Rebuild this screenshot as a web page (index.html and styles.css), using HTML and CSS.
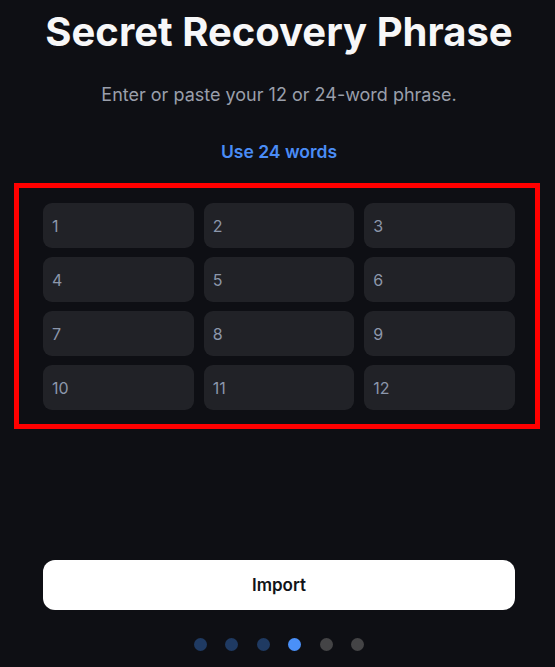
FILE: index.html
```html
<!DOCTYPE html>
<html lang="en">
<head>
<meta charset="utf-8">
<title>Secret Recovery Phrase</title>
<link rel="stylesheet" href="styles.css">
</head>
<body>
<main class="screen">
  <header class="intro">
    <h1 class="title">Secret Recovery Phrase</h1>
    <p class="subtitle">Enter or paste your 12 or 24-word phrase.</p>
    <a class="toggle" href="#">Use 24 words</a>
  </header>

  <section class="phrase-box">
    <div class="phrase-grid">
      <div class="word"><span class="num">1</span></div>
      <div class="word"><span class="num">2</span></div>
      <div class="word"><span class="num">3</span></div>
      <div class="word"><span class="num">4</span></div>
      <div class="word"><span class="num">5</span></div>
      <div class="word"><span class="num">6</span></div>
      <div class="word"><span class="num">7</span></div>
      <div class="word"><span class="num">8</span></div>
      <div class="word"><span class="num">9</span></div>
      <div class="word"><span class="num">10</span></div>
      <div class="word"><span class="num">11</span></div>
      <div class="word"><span class="num">12</span></div>
    </div>
  </section>

  <footer class="actions">
    <button class="import-btn" type="button">Import</button>
    <div class="dots">
      <span class="dot done"></span>
      <span class="dot done"></span>
      <span class="dot done"></span>
      <span class="dot active"></span>
      <span class="dot"></span>
      <span class="dot"></span>
    </div>
  </footer>
</main>
</body>
</html>
```

FILE: styles.css
```css
* { box-sizing: border-box; }

html, body {
  margin: 0;
  padding: 0;
  background: #0e0f14;
}

body {
  font-family: Inter, "Noto Sans", "Liberation Sans", sans-serif;
  color: #ffffff;
  width: 555px;
  height: 667px;
  overflow: hidden;
}

.screen {
  display: flex;
  flex-direction: column;
  height: 667px;
}

.intro {
  display: flex;
  flex-direction: column;
  align-items: center;
  margin-left: 43px;
  width: 472px;
}

.title {
  margin: 8px 0 0;
  font-size: 40px;
  line-height: 48px;
  font-weight: 700;
  color: #f7f7f8;
  white-space: nowrap;
}

.subtitle {
  margin: 27px 0 0;
  font-size: 18px;
  line-height: 24px;
  font-weight: 400;
  color: #9a9fab;
}

.toggle {
  margin-top: 33px;
  font-size: 17.5px;
  line-height: 24px;
  font-weight: 600;
  color: #4a8cf6;
  text-decoration: none;
}

.phrase-box {
  margin: 19px 0 0 14px;
  width: 526px;
  border: 5px solid #ff0000;
  padding: 15px 20px 14px 24px;
}

.phrase-grid {
  display: grid;
  grid-template-columns: repeat(3, 1fr);
  column-gap: 10px;
  row-gap: 9px;
}

.word {
  height: 45px;
  border-radius: 9px;
  background: #212227;
  display: flex;
  align-items: center;
  padding-left: 9px;
}

.num {
  font-size: 16px;
  line-height: 20px;
  color: #8c97ab;
}

.actions {
  margin-top: auto;
  display: flex;
  flex-direction: column;
  align-items: center;
  margin-left: 43px;
  width: 472px;
  padding-bottom: 16px;
}

.import-btn {
  width: 100%;
  height: 50px;
  border: none;
  border-radius: 12px;
  background: #ffffff;
  color: #111318;
  font-family: Inter, "Noto Sans", "Liberation Sans", sans-serif;
  font-size: 17px;
  font-weight: 600;
}

.dots {
  display: flex;
  gap: 18.5px;
  margin-top: 28px;
}

.dot {
  width: 13px;
  height: 13px;
  border-radius: 50%;
  background: #444446;
}

.dot.done { background: #1f3a62; }
.dot.active { background: #4a90f8; }
```
